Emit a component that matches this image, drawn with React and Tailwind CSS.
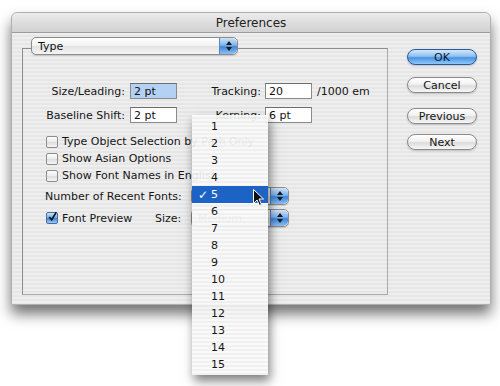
import React from "react";

const stripes =
  "bg-[repeating-linear-gradient(180deg,#eeeeee_0px,#eeeeee_2px,#e6e6e6_2px,#e6e6e6_4px)]";

function Arrows({ blue = true }) {
  return (
    <div
      className={
        "h-full w-[18px] flex flex-col items-center justify-center gap-[2px] rounded-r-[5px] border-l border-[#5a86c0] " +
        (blue
          ? "bg-[linear-gradient(180deg,#cfe4fb_0%,#7fb3ec_45%,#3f86dc_55%,#8cc0f3_100%)]"
          : "bg-[#dcdcdc]")
      }
    >
      <svg width="6" height="4" viewBox="0 0 6 4">
        <path d="M3 0 L6 4 L0 4 Z" fill="#1b1b1b" />
      </svg>
      <svg width="6" height="4" viewBox="0 0 6 4">
        <path d="M0 0 L6 0 L3 4 Z" fill="#1b1b1b" />
      </svg>
    </div>
  );
}

function Popup({ label, width, faint }) {
  return (
    <div
      className={`flex items-center h-[18px] rounded-[5px] border border-[#8c8c8c] bg-[linear-gradient(180deg,#ffffff_0%,#f1f1f1_50%,#e2e2e2_51%,#f4f4f4_100%)] shadow-[0_1px_1px_rgba(0,0,0,0.15)] ${width}`}
    >
      <span className={"flex-1 pl-[6px] text-[11px] leading-none " + (faint ? "text-[#777]" : "text-[#111]")}>
        {label}
      </span>
      <Arrows />
    </div>
  );
}

function Field({ value, selected }) {
  return (
    <div
      className={
        "w-[47px] h-[16px] border border-[#8a8a8a] border-t-[#6e6e6e] flex items-center pl-[3px] text-[11px] leading-none text-[#111] " +
        (selected ? "bg-[#b3d2f3]" : "bg-white")
      }
    >
      {value}
    </div>
  );
}

function Check({ checked, label }) {
  return (
    <div className="flex items-center h-[17px] gap-[4px]">
      {checked ? (
        <div className="w-[12px] h-[12px] rounded-[2px] border border-[#4a6f9e] bg-[linear-gradient(180deg,#c9e1fa_0%,#6ea8e8_50%,#3f86dc_55%,#9ccaf5_100%)] flex items-center justify-center">
          <svg width="11" height="11" viewBox="0 0 11 11" className="-mt-[3px] ml-[1px]">
            <path d="M1.5 6 L4.5 9.5 L10 0.5" fill="none" stroke="#111" strokeWidth="2" />
          </svg>
        </div>
      ) : (
        <div className="w-[12px] h-[12px] rounded-[2px] border border-[#8c8c8c] bg-[linear-gradient(180deg,#fdfdfd_0%,#ececec_50%,#dedede_55%,#f6f6f6_100%)]" />
      )}
      <span className="text-[11px] leading-none text-[#151515] whitespace-nowrap">{label}</span>
    </div>
  );
}

function AquaButton({ label, primary }) {
  return (
    <div
      className={
        "w-[70px] h-[16px] rounded-full border flex items-center justify-center text-[11px] leading-none shadow-[0_1px_2px_rgba(0,0,0,0.2)] " +
        (primary
          ? "border-[#27589c] text-[#0d1a33] bg-[linear-gradient(180deg,#d4e8fc_0%,#8fc0f1_45%,#4a93e2_55%,#8ec8f8_100%)]"
          : "border-[#8a8a8a] text-[#151515] bg-[linear-gradient(180deg,#ffffff_0%,#f2f2f2_45%,#dcdcdc_55%,#f7f7f7_100%)]")
      }
    >
      {label}
    </div>
  );
}

const items = ["1", "2", "3", "4", "5", "6", "7", "8", "9", "10", "11", "12", "13", "14", "15"];

export default function App() {
  return (
    <div
      className="relative w-[500px] h-[386px] bg-white overflow-hidden"
      style={{ fontFamily: '"DejaVu Sans", Verdana, sans-serif' }}
    >
      <div
        className={`ml-[11px] mt-[12px] w-[480px] h-[293px] rounded-t-[6px] border border-[#b0b0b0] shadow-[0_9px_14px_rgba(0,0,0,0.55)] flex flex-col ${stripes}`}
      >
        <div className="h-[20px] rounded-t-[6px] border-b border-[#9c9c9c] bg-[linear-gradient(180deg,#ececec_0%,#dedede_50%,#d2d2d2_100%)] flex items-center justify-center text-[12px] text-[#222]">
          Preferences
        </div>

        <div className="flex flex-1">
          <div className="ml-[10px] mt-[4px] w-[366px] flex flex-col">
            <div className="relative z-10 ml-[9px]">
              <Popup label="Type" width="w-[207px]" />
            </div>
            <div className="-mt-[7px] h-[247px] border border-[#8e8e8e] border-b-[#a9a9a9] border-r-[#a9a9a9] pt-[34px] flex flex-col">
              <div className="flex items-center h-[16px]">
                <span className="w-[102px] text-right text-[11px] leading-none text-[#151515]">Size/Leading:</span>
                <div className="ml-[5px]">
                  <Field value="2 pt" selected />
                </div>
                <span className="w-[84px] text-right text-[11px] leading-none text-[#151515]">Tracking:</span>
                <div className="ml-[4px]">
                  <Field value="20" />
                </div>
                <span className="ml-[5px] text-[11px] leading-none text-[#151515]">/1000 em</span>
              </div>
              <div className="flex items-center h-[16px] mt-[8px]">
                <span className="w-[102px] text-right text-[11px] leading-none text-[#151515]">Baseline Shift:</span>
                <div className="ml-[5px]">
                  <Field value="2 pt" />
                </div>
                <span className="w-[84px] text-right text-[11px] leading-none text-[#151515]">Kerning:</span>
                <div className="ml-[4px]">
                  <Field value="6 pt" />
                </div>
              </div>

              <div className="mt-[10px] ml-[23px] flex flex-col">
                <Check label="Type Object Selection by Path Only" />
                <Check label="Show Asian Options" />
                <Check label="Show Font Names in English" />
              </div>

              <div className="ml-[22px] flex items-center h-[18px] mt-[3px]">
                <span className="w-[146px] text-[11px] leading-none text-[#151515]">Number of Recent Fonts:</span>
                <Popup label="5" width="w-[98px]" />
              </div>
              <div className="ml-[23px] flex items-center h-[18px] mt-[4px]">
                <div className="w-[109px]">
                  <Check checked label="Font Preview" />
                </div>
                <span className="w-[36px] text-[11px] leading-none text-[#151515]">Size:</span>
                <Popup label="Medium" width="w-[98px]" faint />
              </div>
            </div>
          </div>

          <div className="ml-[19px] mt-[16px] flex flex-col">
            <AquaButton label="OK" primary />
            <div className="mt-[12px]">
              <AquaButton label="Cancel" />
            </div>
            <div className="mt-[15px]">
              <AquaButton label="Previous" />
            </div>
            <div className="mt-[10px]">
              <AquaButton label="Next" />
            </div>
          </div>
        </div>
      </div>

      <div className="absolute left-[192px] top-[115px] w-[76px] h-[260px] pt-[3px] bg-[repeating-linear-gradient(180deg,rgba(250,250,250,0.93)_0px,rgba(250,250,250,0.93)_2px,rgba(240,240,240,0.93)_2px,rgba(240,240,240,0.93)_4px)] shadow-[2px_6px_10px_rgba(0,0,0,0.5)]">
        {items.map((n) =>
          n === "5" ? (
            <div key={n} className="relative h-[17px] flex items-center bg-[#1d63c6] text-white text-[11px] leading-none">
              <span className="absolute left-[6px] text-[12px] leading-none">✓</span>
              <span className="pl-[19px]">{n}</span>
            </div>
          ) : (
            <div key={n} className="h-[17px] flex items-center pl-[19px] text-[11px] leading-none text-[#151515]">
              {n}
            </div>
          )
        )}
      </div>

      <svg className="absolute left-[253px] top-[189px]" width="12" height="18" viewBox="0 0 12 18">
        <path d="M0.5 0.5 L0.5 14.5 L4 11 L6.5 16.5 L8.5 15.5 L6 10 L10.5 10 Z" fill="#111" stroke="#fff" strokeWidth="1" />
      </svg>
    </div>
  );
}
